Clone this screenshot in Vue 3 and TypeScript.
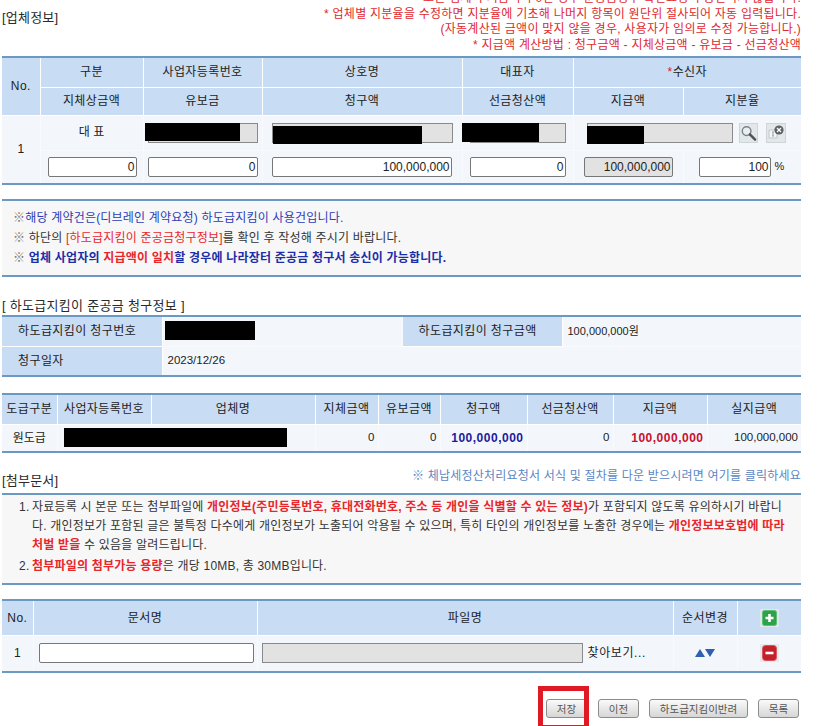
<script setup lang="ts">
const notes = [
  '모든 업체의 지급액이 0인 경우 준공금청구 확인요청이 승인되지 않습니다.',
  '* 업체별 지분율을 수정하면 지분율에 기초해 나머지 항목이 원단위 절사되어 자동 입력됩니다.',
  '(자동계산된 금액이 맞지 않을 경우, 사용자가 임의로 수정 가능합니다.)',
  '* 지급액 계산방법 : 청구금액 - 지체상금액 - 유보금 - 선금청산액',
]
</script>

<template>
  <div class="page">
    <section class="top">
      <h2 class="title first">[업체정보]</h2>
      <div class="notes">
        <p v-for="n in notes" :key="n">{{ n }}</p>
      </div>
    </section>

    <table class="grid t1">
      <colgroup>
        <col style="width:38px" /><col style="width:103px" /><col style="width:119px" /><col style="width:200px" /><col style="width:111px" /><col style="width:110px" /><col style="width:118px" />
      </colgroup>
      <thead>
        <tr class="h30">
          <th rowspan="2">No.</th><th>구분</th><th>사업자등록번호</th><th>상호명</th><th>대표자</th>
          <th colspan="2"><span class="star">*</span>수신자</th>
        </tr>
        <tr class="h28">
          <th>지체상금액</th><th>유보금</th><th>청구액</th><th>선금청산액</th><th>지급액</th><th>지분율</th>
        </tr>
      </thead>
      <tbody>
        <tr class="r1">
          <td rowspan="2" class="c">1</td>
          <td class="c">대 표</td>
          <td><div class="ro w-a"><i class="mask m-a"></i></div></td>
          <td><div class="ro w-b"><i class="mask m-b"></i></div></td>
          <td><div class="ro w-c"><i class="mask m-c"></i></div></td>
          <td colspan="2">
            <div class="recv">
              <div class="ro w-d"><i class="mask m-d"></i></div>
              <span class="icon-btn">
                <svg width="18" height="18" viewBox="0 0 18 18"><circle cx="7" cy="7" r="4.6" fill="#e8eef2" stroke="#7a848c" stroke-width="1.5"/><path d="M10.5 10.5 16 16" stroke="#55504a" stroke-width="2.6" stroke-linecap="round"/></svg>
              </span>
              <span class="icon-btn second">
                <svg width="18" height="18" viewBox="0 0 18 18"><path d="M2 6h8v8H2z" fill="#f4f4f4" stroke="#c2c6c9"/><path d="M5 8h2M6 8v4M5 12h2" stroke="#9aa0a5" fill="none"/><circle cx="12" cy="6" r="4.6" fill="#5d6166"/><path d="M10 4l4 4M14 4l-4 4" stroke="#fff" stroke-width="1.3"/></svg>
              </span>
            </div>
          </td>
        </tr>
        <tr class="r2">
          <td><input class="num w-e" value="0" /></td>
          <td><input class="num w-f" value="0" /></td>
          <td><input class="num w-g" value="100,000,000" /></td>
          <td><input class="num w-h" value="0" /></td>
          <td><input class="num grey w-i" value="100,000,000" readonly /></td>
          <td><input class="num w-j" value="100" /><span class="pct">%</span></td>
        </tr>
      </tbody>
    </table>

    <div class="info">
      <p><span class="g">※</span><span class="blue">해당 계약건은(디브레인 계약요청) 하도급지킴이 사용건입니다.</span></p>
      <p><span class="g">※</span> 하단의 <span class="red">[하도급지킴이 준공금청구정보]</span>를 확인 후 작성해 주시기 바랍니다.</p>
      <p><span class="g">※</span> <b class="navy">업체 사업자의 <span class="red">지급액이 일치</span>할 경우에 나라장터 준공금 청구서 송신이 가능합니다.</b></p>
    </div>

    <h2 class="title t-claim">[ 하도급지킴이 준공금 청구정보 ]</h2>
    <table class="grid t2">
      <colgroup><col style="width:160px" /><col style="width:240px" /><col style="width:160px" /><col style="width:239px" /></colgroup>
      <tbody>
        <tr class="h30">
          <th class="left">하도급지킴이 청구번호</th>
          <td class="cell-rel"><i class="mask m-e"></i></td>
          <th class="left">하도급지킴이 청구금액</th>
          <td class="val amt-val">100,000,000원</td>
        </tr>
        <tr class="h30">
          <th class="left">청구일자</th>
          <td class="val" colspan="3">2023/12/26</td>
        </tr>
      </tbody>
    </table>

    <table class="grid t3">
      <colgroup>
        <col style="width:55px" /><col style="width:94px" /><col style="width:164px" /><col style="width:63px" /><col style="width:62px" /><col style="width:87px" /><col style="width:86px" /><col style="width:94px" /><col style="width:94px" />
      </colgroup>
      <thead>
        <tr class="h30"><th>도급구분</th><th>사업자등록번호</th><th>업체명</th><th>지체금액</th><th>유보금액</th><th>청구액</th><th>선금청산액</th><th>지급액</th><th>실지급액</th></tr>
      </thead>
      <tbody>
        <tr class="r3">
          <td class="c">원도급</td>
          <td colspan="2" class="cell-rel"><i class="mask m-f"></i></td>
          <td class="r">0</td><td class="r">0</td>
          <td class="r amt navy2">100,000,000</td>
          <td class="r">0</td>
          <td class="r amt crimson">100,000,000</td>
          <td class="r">100,000,000</td>
        </tr>
      </tbody>
    </table>

    <div class="attach-head">
      <h2 class="title">[첨부문서]</h2>
      <span class="link">※ 체납세정산처리요청서 서식 및 절차를 다운 받으시려면 여기를 클릭하세요</span>
    </div>
    <ol class="guide">
      <li>자료등록 시 본문 또는 첨부파일에 <b>개인정보(주민등록번호, 휴대전화번호, 주소 등 개인을 식별할 수 있는 정보)</b>가 포함되지 않도록 유의하시기 바랍니다. 개인정보가 포함된 글은 불특정 다수에게 개인정보가 노출되어 악용될 수 있으며, 특히 타인의 개인정보를 노출한 경우에는 <b>개인정보보호법에 따라 처벌 받을</b> 수 있음을 알려드립니다.</li>
      <li><b>첨부파일의 첨부가능 용량</b>은 개당 10MB, 총 30MB입니다.</li>
    </ol>

    <table class="grid t4">
      <colgroup><col style="width:31px" /><col style="width:224px" /><col style="width:416px" /><col style="width:64px" /><col style="width:64px" /></colgroup>
      <thead>
        <tr class="h35">
          <th>No.</th><th>문서명</th><th>파일명</th><th>순서변경</th>
          <th>
            <svg class="sq" width="19" height="18" viewBox="0 0 19 18">
              <rect width="19" height="18" fill="#dfe7ee"/>
              <rect x="2.5" y="1.5" width="14" height="15" rx="2" fill="#2ea24a" stroke="#5cbf72"/>
              <path d="M9.5 5v8M5.5 9h8" stroke="#fff" stroke-width="2.6"/>
            </svg>
          </th>
        </tr>
      </thead>
      <tbody>
        <tr class="r4">
          <td class="c">1</td>
          <td><input class="text w-k" /></td>
          <td>
            <div class="file"><div class="ro w-l"></div><span class="browse">찾아보기...</span></div>
          </td>
          <td class="c">
            <span class="arrows">
              <svg width="10" height="8" viewBox="0 0 10 8"><path d="M5 0 10 8H0z" fill="#2f5fb0"/></svg>
              <svg width="10" height="8" viewBox="0 0 10 8"><path d="M0 0h10L5 8z" fill="#2f5fb0"/></svg>
            </span>
          </td>
          <td class="c">
            <svg class="sq" width="19" height="18" viewBox="0 0 19 18">
              <rect width="19" height="18" fill="#e6eaee"/>
              <rect x="2.5" y="1.5" width="14" height="15" rx="3" fill="#c4202c" stroke="#d9545c"/>
              <path d="M5.5 9h8" stroke="#fff" stroke-width="2.6"/>
            </svg>
          </td>
        </tr>
      </tbody>
    </table>

    <div class="actions">
      <span class="save-wrap"><button class="btn b-s">저장</button></span>
      <button class="btn b-s">이전</button>
      <button class="btn b-l">하도급지킴이반려</button>
      <button class="btn b-s">목록</button>
    </div>
  </div>
</template>

<style>
html, body { margin: 0; height: 726px; overflow: hidden; background: #fff; }
</style>

<style scoped>
.page {
  width: 799px;
  margin: -6px 0 0 2px;
  font: 12px/1.2 "Liberation Sans", "Noto Sans CJK KR", sans-serif;
  color: #222;
}
p, h2, ol { margin: 0; padding: 0; }
.top { display: flex; justify-content: space-between; height: 62px; }
.title { font-size: 13px; font-weight: 400; color: #2a2a2a; line-height: 16px; letter-spacing: .2px; }
.first { margin-top: 16px; }
.notes { margin-top: -3px; text-align: right; color: #e0282e; font-size: 12px; letter-spacing: .25px; line-height: 15.6px; }
.grid { width: 799px; table-layout: fixed; border-collapse: collapse; border-top: 2px solid #6a9ac4; border-bottom: 2px solid #6a9ac4; }
.grid th { background: #c8dcf4; font-weight: 400; font-size: 12px; letter-spacing: .4px; color: #222; padding: 0; border: 1px solid #fff; border-top: 0; text-align: center; }
.grid td { background: #f3f7fc; padding: 0; border-left: 1px solid #f8fafd; border-right: 1px solid #f8fafd; border-bottom: 1px solid #f8fafd; }
.grid th:first-child, .grid td:first-child { border-left: 0; }
.grid th:last-child, .grid td:last-child { border-right: 0; }
.h28 { height: 28px; }
.h30 { height: 30px; }
.h35 { height: 35px; }
.r1 { height: 35px; }
.r2 { height: 34px; }
.r3 { height: 28px; }
.r4 { height: 37px; }
.c { text-align: center; }
.r { text-align: right; padding-right: 3px !important; font-size: 11.5px; }
.star { color: #d8202a; }
.ro { position: relative; height: 20px; background: #e2e2e2; border: 1px solid #8a8a8a; box-sizing: border-box; margin: 0 auto; }
.mask { position: absolute; display: block; background: #000; }
.w-a { width: 110px; margin-left: 4px; }
.m-a { left: -4px; top: -1px; width: 95px; height: 18px; }
.w-b { width: 181px; margin-left: 9px; }
.m-b { left: 0; top: 2px; width: 149px; height: 18px; }
.w-c { width: 96px; margin-left: 7px; }
.m-c { left: -9px; top: -1px; width: 77px; height: 19px; }
.recv { display: flex; align-items: center; gap: 5px; margin-left: 13px; }
.w-d { width: 146px; margin: 0; }
.m-d { left: -1px; top: 2px; width: 57px; height: 18px; }
.icon-btn { width: 19px; height: 20px; display: inline-flex; align-items: center; justify-content: center; background: #e2e7ea; border: 1px solid #cfd4d8; box-sizing: border-box; margin-left: 1px; }
.second { width: 20px; margin-left: 3px; }
.num, .text { box-sizing: border-box; height: 20px; border: 1px solid #777; border-radius: 2px; background: #fff; padding: 0 1px 0 0; font: 12px "Liberation Sans", sans-serif; color: #222; text-align: right; display: block; outline: none; }
.w-e { width: 89px; margin-left: 7px; }
.w-f { width: 110px; margin-left: 4px; }
.w-g { width: 180px; margin-left: 9px; }
.w-h { width: 96px; margin-left: 7px; }
.w-i { width: 89px; margin-left: 10px; }
.w-j { width: 72px; margin-left: 15px; display: inline-block; vertical-align: middle; }
.grey { background: #e2e2e2; }
.pct { font: 11px "Liberation Sans", sans-serif; margin-left: 4px; }
.info { margin-top: 14px; height: 78px; box-sizing: border-box; padding: 7px 11px 0; background: #f7f7f7; border-top: 2px solid #6a9ac4; border-bottom: 2px solid #6a9ac4; font-size: 12px; letter-spacing: .2px; line-height: 20px; color: #333; }
.g { color: #777; }
.blue { color: #2a3db8; }
.navy { color: #1c2ea8; }
.red { color: #e8262c; }
.t-claim { margin-top: 21px; height: 17px; letter-spacing: .3px; }
.left { text-align: left !important; padding-left: 16px !important; }
.val { padding-left: 5px !important; font-size: 11.5px; }
.amt-val { font-size: 11px; }
.cell-rel { position: relative; }
.m-e { left: 2px; top: 4px; width: 90px; height: 19px; }
.m-f { left: 6px; top: 3px; width: 223px; height: 19px; }
.t3 { margin-top: 16px; }
.amt { font-weight: 700; font-size: 12px; letter-spacing: .5px; }
.navy2 { color: #1b1b9c; }
.crimson { color: #c8102e; }
.attach-head { display: flex; justify-content: space-between; align-items: flex-start; margin-top: 15px; height: 25px; }
.attach-head .title { align-self: flex-end; padding-bottom: 4px; }
.link { color: #5b86c4; font-size: 12px; letter-spacing: .2px; line-height: 16px; }
.guide { list-style: none; counter-reset: g; background: #f7f7f7; border-top: 2px solid #6a9ac4; border-bottom: 2px solid #6a9ac4; height: 92px; box-sizing: border-box; padding: 3px 11px 0 30px; font-size: 12px; letter-spacing: .2px; line-height: 19px; color: #333; }
.guide li { counter-increment: g; position: relative; }
.guide li + li { margin-top: 2px; }
.guide li::before { content: counter(g) ". "; position: absolute; left: -13px; }
.guide b { color: #e8262c; }
.t4 { margin-top: 14px; }
.w-k { width: 215px; margin-left: 5px; }
.sq { display: inline-block; vertical-align: middle; }
.file { display: flex; align-items: center; gap: 5px; margin-left: 4px; }
.w-l { width: 321px; margin: 0; }
.browse { letter-spacing: .6px; }
.arrows { display: inline-flex; }
.actions { display: flex; justify-content: flex-end; align-items: center; gap: 10px; margin-top: 26px; padding-right: 2px; }
.btn { display: block; height: 19px; padding: 0; box-sizing: border-box; border: 1px solid #8c8c8c; border-radius: 3px; background: linear-gradient(#fafafa, #d6d6d6); font: 10.5px "Noto Sans CJK KR", sans-serif; color: #555; }
.b-s { width: 41px; }
.b-l { width: 99px; }
.save-wrap { position: relative; display: block; margin-right: 1px; }
.save-wrap::after { content: ""; position: absolute; left: -8px; right: -2px; top: -13px; height: 44px; box-sizing: border-box; border: 5px solid #e01a24; pointer-events: none; }
</style>
